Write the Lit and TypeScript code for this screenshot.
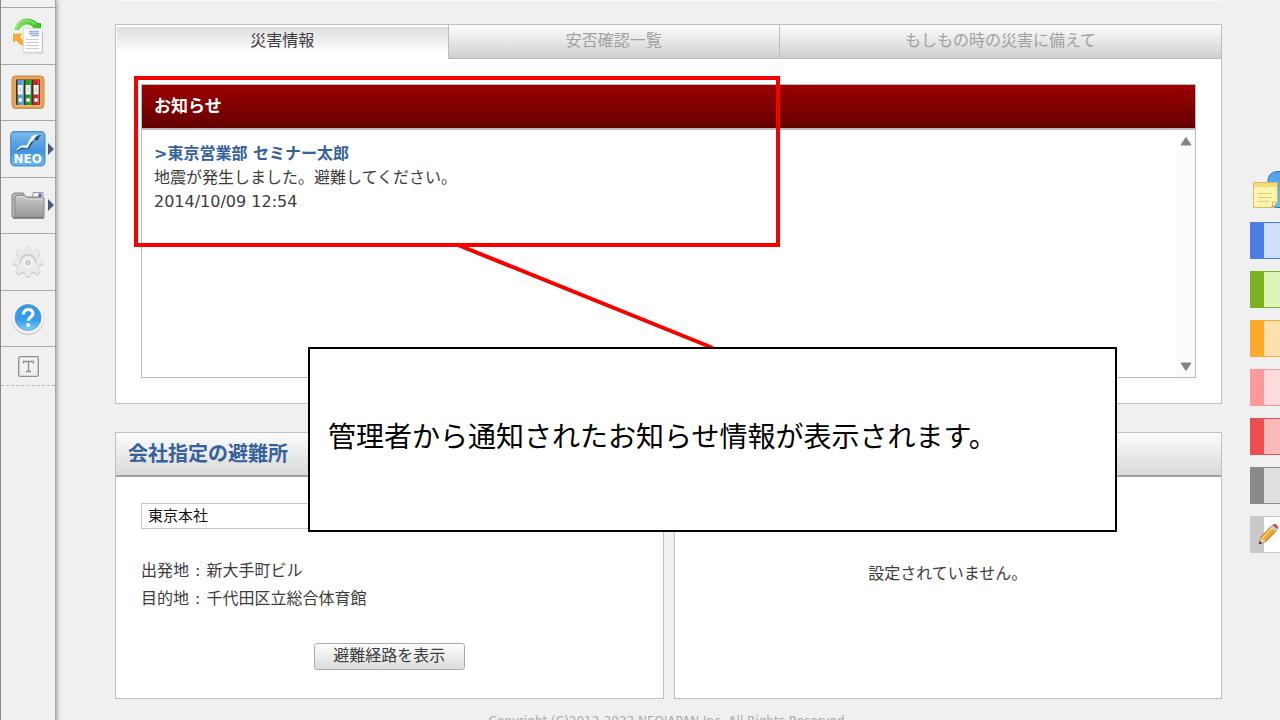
import { LitElement, html, css, svg } from "lit";
import { customElement, state } from "lit/decorators.js";

const arrow = html`<svg class="more" width="6" height="12" viewBox="0 0 6 12" aria-hidden="true"><path d="M0 0 6 6 0 12z" fill="#4b5f86"/></svg>`;

const iconSync = html`<svg width="36" height="36" viewBox="0 0 36 36" aria-hidden="true">
  <defs><linearGradient id="gr" x1="0" x2="1"><stop offset="0" stop-color="#8be468"/><stop offset="1" stop-color="#35bd1c"/></linearGradient></defs>
  <path d="M3.500 12.500C6-1 20-3.500 27.500 4.500L31.500 4.500V14.500H20.500L23 10C18.500 4.500 11.500 7 9.500 13z" fill="url(#gr)" stroke="#fff" stroke-width="1"/>
  <path d="M6 10C9 2 18 0 25 6" fill="none" stroke="#b6f3a2" stroke-width="1.200" opacity=".7"/>
  <path d="M2.500 15H13.500L11 18.500C12 21 13.500 22.500 16 23V29C11.500 28.500 8 26.500 6 23L2.500 26z" fill="#f8a936" stroke="#fff" stroke-width="1"/>
  <path d="M13.500 34.800h19M32.500 14v21" stroke="#b0b0b0" stroke-width=".9"/>
  <path d="M13.500 10.500h18.500v23.800H13.500z" fill="#fdfdfe" stroke="#d4d8dc" stroke-width=".8"/>
  <path d="M19 13.500h10M19 15.500h10M21 17.500h8" stroke="#9fb4d2" stroke-width="1.300"/>
  <path d="M16 21.500h13M16 24.500h13M16 27.500h13M16 30.500h13" stroke="#c5cddb"/>
</svg>`;

const binder = (x: number, fill: string, edge: string) => svg`
  <path d=${`M${x} 6h6v25h-6z`} fill=${fill}/>
  <path d=${`M${x + 5.4} 6v25`} stroke=${edge} stroke-width="1.2"/>
  <rect x=${x + 0.4} y="11" width="4.800" height="9.500" fill="#f6f8fa"/>
  <path d=${`M${x + 2.8} 13v5`} stroke="#b5bdc6"/>
  <circle cx=${x + 2.8} cy="26" r="1.900" fill="#fff"/>`;

const iconBinders = html`<svg width="36" height="36" viewBox="0 0 36 36" aria-hidden="true">
  <rect x="2" y="3" width="32" height="32" rx="3.500" fill="#a86d25" opacity=".55"/>
  <rect x="2" y="2" width="32" height="32" rx="3.500" fill="#e6a556" stroke="#c98a42"/>
  <rect x="6" y="5.500" width="24" height="25.500" fill="#4b2d12"/>
  ${binder(7.5, "#4b9fdd", "#7bbef0")}${binder(15.3, "#239a2c", "#45b94a")}${binder(23.2, "#cd2433", "#e75863")}
  <path d="M5 32h26" stroke="#f9c878"/>
</svg>`;

const iconNeo = html`<svg width="36" height="36" viewBox="0 0 36 36" aria-hidden="true">
  <defs><linearGradient id="nb" x1="0" y1="0" x2="0" y2="1"><stop offset="0" stop-color="#7dbcec"/><stop offset=".55" stop-color="#4394dc"/><stop offset="1" stop-color="#68bdf4"/></linearGradient></defs>
  <rect x=".8" y=".8" width="34" height="34" rx="4" fill="url(#nb)" stroke="#4a91cf" stroke-width="1.400"/>
  <path d="M6 20.500C8 16 13 14 17 15.500L22 6C24 3.500 27 4 31.500 4.500 29 5 29 7 28 9.500L24.500 9 19 17.500 12 18z" fill="#2f5277"/>
  <path d="M6 20C8 15.500 12 13.500 16.500 14.500L21.500 5.500C23 3.500 26 3.500 29 4 25.500 5 25 7 23.500 9.500 20.500 10.500 19 15 17.500 17L11.500 16.500z" fill="#eef5fb"/>
  <text x="17.800" y="31.500" text-anchor="middle" font-family="DejaVu Sans" font-weight="700" font-size="12" fill="#fff">NEO</text>
</svg>`;

const iconFolder = html`<svg width="36" height="32" viewBox="0 0 36 32" aria-hidden="true">
  <defs><linearGradient id="fo" x1="0" y1="0" x2="0" y2="1"><stop offset="0" stop-color="#c8c8c8"/><stop offset="1" stop-color="#9a9a9a"/></linearGradient></defs>
  <path d="M23 3.500h10v7h-10z" fill="#f2f2f8" stroke="#999"/><path d="M28.500 4.500h3v3.500h-3z" fill="#5b58d0"/>
  <path d="M2 28V6l2-2h9l3 4h14v20z" fill="#b4b4b4" stroke="#858585"/>
  <path d="M5 28V8l2-1.500h7l3 2.500h17v19z" fill="url(#fo)" stroke="#8b8b8b"/>
  <path d="M6 9l1.500-1.500H14l3 2.500h16" fill="none" stroke="#e4e4e4"/>
  <path d="M3 29h31" stroke="#6e6e6e" stroke-width="1.500"/>
</svg>`;

const iconGear = html`<svg width="34" height="34" viewBox="0 0 34 34" aria-hidden="true">
  <path d="M15 3h4l1 4 3 1 3.500-2.500 3 3L27 12l1.500 3 3.500 1v4l-4 1-1 3 2.500 3.500-3 3L23 28l-3 1-1 3.500h-4L14 29l-3-1-3.500 2.500-3-3L7 24l-1-3-4-1v-4l4-1 1-3-2.500-3.500 3-3L11 8l3-1z" fill="#bdbdbd"/>
  <path d="M15 2h4l1 4 3 1 3.500-2.500 3 3L27 11l1.500 3 3.500 1v4l-4 1-1 3 2.500 3.500-3 3L23 27l-3 1-1 3.500h-4L14 28l-3-1-3.500 2.500-3-3L7 23l-1-3-4-1v-4l4-1 1-3-2.500-3.500 3-3L11 7l3-1z" fill="#eaeaea" stroke="#d6d6d6" stroke-width=".6"/>
  <path d="M9 18c0-11 16-11 16 0" fill="none" stroke="#c6c6c6" stroke-width="1.300"/>
  <circle cx="17" cy="18" r="5.500" fill="#f1f1f1"/>
  <circle cx="17" cy="17.500" r="2" fill="#e0e0e0" stroke="#b4b4b4"/>
</svg>`;

const iconHelp = html`<svg width="34" height="34" viewBox="0 0 34 34" aria-hidden="true">
  <defs><linearGradient id="he" x1="0" y1="0" x2="0" y2="1"><stop offset="0" stop-color="#3c93e4"/><stop offset=".6" stop-color="#379cf0"/><stop offset="1" stop-color="#7cd3fc"/></linearGradient></defs>
  <circle cx="17" cy="17.800" r="16" fill="#b5b5b5"/>
  <circle cx="17" cy="16.500" r="16.200" fill="#f6f6f6" stroke="#dcdcdc" stroke-width=".6"/>
  <circle cx="17" cy="16.500" r="13" fill="url(#he)" stroke="#4b93cf" stroke-width=".8"/>
  <path d="M12.500 13.500c0-6.500 9.500-6.500 9.500-1 0 3.500-4.700 3.500-4.700 7.300" fill="none" stroke="#fff" stroke-width="3.200"/>
  <circle cx="17.200" cy="24" r="2" fill="#fff"/>
</svg>`;

const iconText = html`<svg width="21" height="21" viewBox="0 0 21 21" aria-hidden="true">
  <rect x=".7" y=".7" width="19.600" height="19.600" rx="1.500" fill="none" stroke="#8f8f8f" stroke-width="1.300"/>
  <path d="M5.500 7.500V5.500h10v2M10.500 5.500v10M8 15.500h5" fill="none" stroke="#8f8f8f" stroke-width="1.300"/>
</svg>`;

const iconNotes = html`<svg width="40" height="40" viewBox="0 0 40 40" aria-hidden="true">
  <defs><linearGradient id="no" x1="0" y1="0" x2="0" y2="1"><stop offset="0" stop-color="#4f9fec"/><stop offset="1" stop-color="#52cbe6"/></linearGradient></defs>
  <rect x="16" y="1.500" width="36" height="36" rx="9" fill="url(#no)" stroke="#3973b4"/>
  <path d="M1.500 12.500h24V32l-5 5.500h-19z" fill="#fdf5ae" stroke="#dcb865"/>
  <path d="M2 13h23v4H2z" fill="#f6d978"/>
  <path d="M20.500 37.500V32h5z" fill="#fffbe1" stroke="#d2aa58"/>
  <path d="M6 23.500h14M6 27.500h14M6 31.500h11" stroke="#e2cc7a"/>
</svg>`;

const iconPencil = html`<svg width="22" height="24" viewBox="0 0 22 24" aria-hidden="true">
  <path d="M1 21l2-7L14 2.500 19 7 8 18.500z" fill="#f4a52a" stroke="#a5702a"/>
  <path d="M4.500 15L14.500 4.500" stroke="#ffdc86" stroke-width="1.500"/>
  <path d="M1 21l2-6.500 4.500 4z" fill="#ecd2aa"/><path d="M.8 21.300l1-3.300 2.400 2.200z" fill="#333"/>
  <path d="M12.500 4l2-2 4.800 4.300-2 2.200z" fill="#c5ccd3"/>
  <path d="M14.500 2c2-3 7 1 5 4.300z" fill="#df3440"/>
</svg>`;

@customElement("side-nav")
class SideNav extends LitElement {
  static styles = css`
    :host { display: block; padding-top: 7px; border-left: 1px solid #8d8782; border-right: 1px solid #a5a5a5; box-shadow: 1px 0 4px #999; background: #f0f0f0; }
    .items { display: grid; grid-template-rows: repeat(6, 1fr); height: 339px; }
    .item { position: relative; display: flex; align-items: center; justify-content: center; width: 100%; padding: 0; border: 0; border-top: 1px solid #a8a8a8; background: none; }
    .text { height: 40px; border-bottom: 1px dashed #b8b8b8; }
    .more { position: absolute; right: 1px; }
  `;
  render() {
    const items = [
      { name: "更新", icon: iconSync }, { name: "キャビネット", icon: iconBinders },
      { name: "NEO", icon: iconNeo, more: true }, { name: "フォルダ", icon: iconFolder, more: true },
      { name: "設定", icon: iconGear }, { name: "ヘルプ", icon: iconHelp },
    ];
    return html`<nav>
      <div class="items">${items.map((i) => html`<button class="item" aria-label=${i.name}>${i.icon}${i.more ? arrow : ""}</button>`)}</div>
      <button class="item text" aria-label="文字">${iconText}</button>
    </nav>`;
  }
}

@customElement("note-rail")
class NoteRail extends LitElement {
  static styles = css`
    :host { display: flex; flex-direction: column; gap: 12px; padding-top: 170px; overflow: hidden; }
    button { padding: 0; flex: none; text-align: left; }
    .notes { height: 40px; border: 0; padding-left: 2px; background: none; overflow: hidden; }
    .note { height: 37px; border: 1px solid; border-left-width: 14px; border-right: 0; }
    .blue { border-color: #4b7de3; background: #d0dff9; }
    .green { border-color: #7bb020; background: #dcf3b9; }
    .orange { border-color: #fdaa2c; background: #ffdfad; }
    .pink { border-color: #fd989b; background: #fddadb; }
    .red { border-color: #ee4e50; background: #f8babb; }
    .gray { border-color: #898989; background: #dfdfdf; }
    .white { border-color: #c9c9c9; background: #fff; }
    .white svg { display: block; margin-left: -6px; }
  `;
  render() {
    return html`<button class="notes" aria-label="付箋">${iconNotes}</button>
      ${["blue", "green", "orange", "pink", "red", "gray", "white"].map((c) => html`<button class="note ${c}" aria-label=${c}>${c === "white" ? iconPencil : ""}</button>`)}`;
  }
}

@customElement("app-root")
class AppRoot extends LitElement {
  @state() tab = 0;

  static styles = css`
    :host { display: grid; grid-template-columns: 56px minmax(0, 1fr) 30px; height: 100vh; overflow: hidden; background: #f0f0f0; color: #3c3c3c; font: 16px/24px "DejaVu Sans", "Noto Sans CJK JP", sans-serif; }
    button, select { font: inherit; color: inherit; }
    h2, p, dl, dd { margin: 0; }
    main { position: relative; padding: 0 28px 0 59px; }
    .top { height: 1px; margin-bottom: 23px; background: #fafafa; }
    .panel { border: 1px solid #c0c0c0; background: #fff; }
    .tabs { display: grid; grid-template-columns: 3fr 3fr 4fr; }
    .tab { height: 34px; padding: 0 0 2px; border: 0; border-left: 1px solid #bbb; border-bottom: 1px solid #bbb; background: linear-gradient(#fdfdfd, #cfcfcf); color: #a0a0a0; }
    .tab[aria-selected="true"] { border-left-color: #fff; border-bottom-color: #fff; background: linear-gradient(#dcdcdc, #fff 90%); box-shadow: inset 0 2px #fff; color: #3c3c3c; }
    .notice { display: grid; grid-template-rows: auto 1fr; height: 294px; margin: 25px; border: 1px solid #bbb; box-sizing: border-box; }
    .notice-title { padding: 9px 12px 10px; border-bottom: 2px solid #bbb; background: linear-gradient(#9c0000, #640000); color: #fff; font-size: 17px; line-height: 24px; }
    .notice-body { display: flex; justify-content: space-between; }
    .message { padding: 12px; }
    .message a { color: #35629a; font-weight: 700; text-decoration: none; }
    .scroll { display: flex; flex-direction: column; justify-content: space-between; width: 19px; background: #fcfcfc; }
    .scroll button { display: flex; justify-content: center; padding: 6px 0 5px; border: 0; background: none; }
    .cards { display: grid; grid-template-columns: 1fr 1fr; gap: 10px; margin-top: 28px; }
    .card-title { min-height: 44px; box-sizing: border-box; padding: 8px 12px; border-bottom: 2px solid #a0a0a0; background: linear-gradient(#fcfcfc, #d9d9d9); color: #35629a; font-size: 20px; line-height: 26px; }
    .card-body { display: flex; flex-direction: column; align-items: flex-start; height: 221px; box-sizing: border-box; padding: 26px 25px; }
    .office { appearance: none; width: 300px; height: 26px; padding: 0 6px; border: 1px solid #c6c6c6; border-radius: 0; background: #fff; color: #111; font-size: 15px; line-height: 24px; }
    .route { margin: 28px 0 30px; line-height: 28px; }
    .route div { display: flex; }
    .route .sep { padding: 0 1px; white-space: pre; }
    .show { align-self: center; width: 151px; height: 27px; padding: 0 0 2px; border: 1px solid #aaa; border-radius: 3px; background: linear-gradient(#fdfdfd, #dcdcdc); line-height: 22px; }
    .empty { align-self: center; margin-top: 59px; }
    .copy { margin-top: 14px; text-align: center; color: #aaa; font-size: 12px; line-height: 16px; }
    .frame { position: absolute; left: 78px; top: 76px; width: 646px; height: 171px; box-sizing: border-box; border: 4px solid #f80000; pointer-events: none; }
    .leader { position: absolute; left: 398px; top: 242px; }
    .callout { position: absolute; left: 252px; top: 347px; width: 809px; height: 185px; box-sizing: border-box; padding: 66px 18px; border: 2px solid #000; background: #fff; color: #000; font-size: 28px; line-height: 40px; font-family: "Noto Sans CJK JP", sans-serif; }
  `;

  render() {
    const tabs = ["災害情報", "安否確認一覧", "もしもの時の災害に備えて"];
    return html`
      <side-nav></side-nav>
      <main>
        <div class="top"></div>
        <section class="panel">
          <div class="tabs" role="tablist">
            ${tabs.map((t, i) => html`<button class="tab" role="tab" aria-selected=${i === this.tab ? "true" : "false"} @click=${() => (this.tab = i)}>${t}</button>`)}
          </div>
          <div class="notice">
            <h2 class="notice-title">お知らせ</h2>
            <div class="notice-body">
              <div class="message">
                <a href="#">&gt;東京営業部 セミナー太郎</a>
                <p>地震が発生しました。避難してください。</p>
                <p>2014/10/09 12:54</p>
              </div>
              <div class="scroll">
                <button aria-label="上へ"><svg width="12" height="10" viewBox="0 0 12 10"><path d="M6 1.500 11 9H1z" fill="#858585" stroke="#858585" stroke-linejoin="round"/></svg></button>
                <button aria-label="下へ"><svg width="12" height="10" viewBox="0 0 12 10"><path d="M6 8.500 11 1H1z" fill="#858585" stroke="#858585" stroke-linejoin="round"/></svg></button>
              </div>
            </div>
          </div>
        </section>
        <div class="cards">
          <section class="panel">
            <h2 class="card-title">会社指定の避難所</h2>
            <div class="card-body">
              <select class="office" aria-label="会社指定の避難所"><option>東京本社</option></select>
              <dl class="route">
                <div><dt>出発地</dt><dd><span class="sep"> : </span>新大手町ビル</dd></div>
                <div><dt>目的地</dt><dd><span class="sep"> : </span>千代田区立総合体育館</dd></div>
              </dl>
              <button class="show">避難経路を表示</button>
            </div>
          </section>
          <section class="panel">
            <div class="card-title"></div>
            <div class="card-body"><p class="empty">設定されていません。</p></div>
          </section>
        </div>
        <p class="copy">Copyright (C)2012-2022 NEOJAPAN,Inc. All Rights Reserved.</p>
        <div class="frame"></div>
        <svg class="leader" width="264" height="108" viewBox="0 0 264 108" aria-hidden="true"><path d="M4 3 259 106" stroke="#f80000" stroke-width="4"/></svg>
        <div class="callout">管理者から通知されたお知らせ情報が表示されます。</div>
      </main>
      <note-rail></note-rail>`;
  }
}
